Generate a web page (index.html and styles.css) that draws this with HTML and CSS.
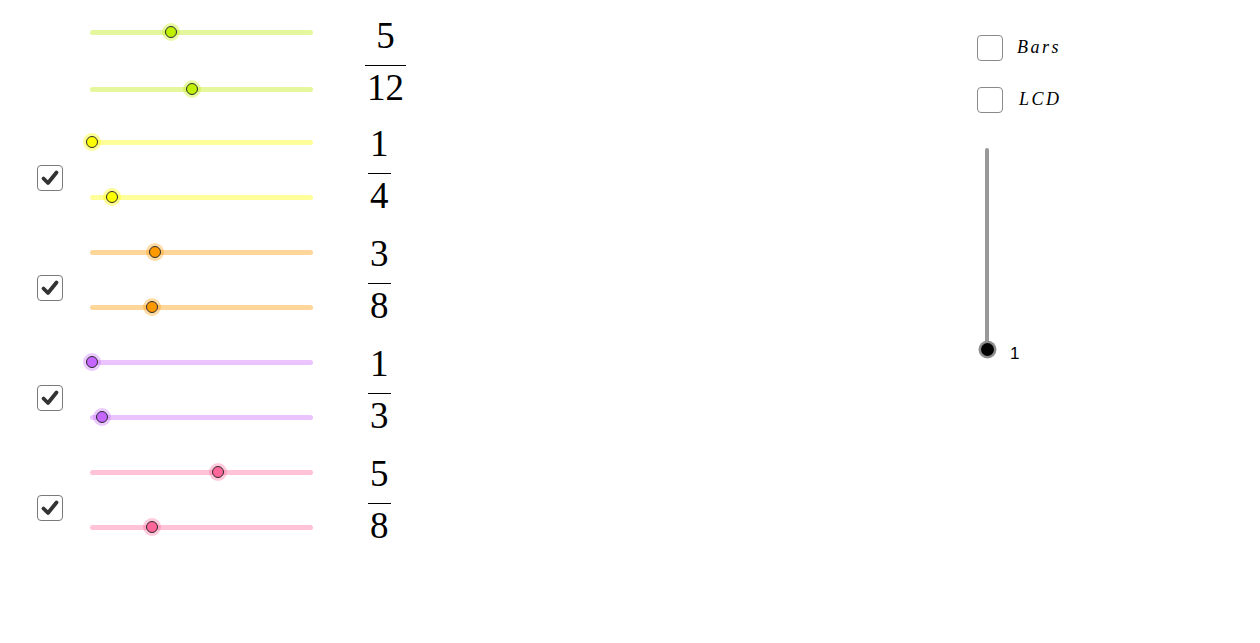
FILE: index.html
```html
<!DOCTYPE html>
<html>
<head>
<meta charset="utf-8">
<link rel="stylesheet" href="styles.css">
</head>
<body>
<div class="page">
  <div class="left">
    <div class="group">
      <div class="cb-cell"></div>
      <div class="sliders">
        <div class="slider lime"><div class="track"></div><div class="knob" style="left:81px"></div></div>
        <div class="slider lime first-pair"><div class="track"></div><div class="knob" style="left:102px"></div></div>
      </div>
      <div class="frac wide"><span class="num">5</span><span class="den">12</span></div>
    </div>
    <div class="group">
      <div class="cb-cell"><span class="cb checked"><svg viewBox="0 0 26 26" width="26" height="26"><path d="M6.5 13.5 L11 18 L19.5 7.5" fill="none" stroke="#333" stroke-width="3.8" stroke-linecap="round" stroke-linejoin="round"/></svg></span></div>
      <div class="sliders">
        <div class="slider yellow"><div class="track"></div><div class="knob" style="left:2px"></div></div>
        <div class="slider yellow"><div class="track"></div><div class="knob" style="left:22px"></div></div>
      </div>
      <div class="frac"><span class="num">1</span><span class="den">4</span></div>
    </div>
    <div class="group">
      <div class="cb-cell"><span class="cb checked"><svg viewBox="0 0 26 26" width="26" height="26"><path d="M6.5 13.5 L11 18 L19.5 7.5" fill="none" stroke="#333" stroke-width="3.8" stroke-linecap="round" stroke-linejoin="round"/></svg></span></div>
      <div class="sliders">
        <div class="slider orange"><div class="track"></div><div class="knob" style="left:65px"></div></div>
        <div class="slider orange"><div class="track"></div><div class="knob" style="left:62px"></div></div>
      </div>
      <div class="frac"><span class="num">3</span><span class="den">8</span></div>
    </div>
    <div class="group">
      <div class="cb-cell"><span class="cb checked"><svg viewBox="0 0 26 26" width="26" height="26"><path d="M6.5 13.5 L11 18 L19.5 7.5" fill="none" stroke="#333" stroke-width="3.8" stroke-linecap="round" stroke-linejoin="round"/></svg></span></div>
      <div class="sliders">
        <div class="slider purple"><div class="track"></div><div class="knob" style="left:2px"></div></div>
        <div class="slider purple"><div class="track"></div><div class="knob" style="left:12px"></div></div>
      </div>
      <div class="frac"><span class="num">1</span><span class="den">3</span></div>
    </div>
    <div class="group">
      <div class="cb-cell"><span class="cb checked"><svg viewBox="0 0 26 26" width="26" height="26"><path d="M6.5 13.5 L11 18 L19.5 7.5" fill="none" stroke="#333" stroke-width="3.8" stroke-linecap="round" stroke-linejoin="round"/></svg></span></div>
      <div class="sliders">
        <div class="slider pink"><div class="track"></div><div class="knob" style="left:128px"></div></div>
        <div class="slider pink"><div class="track"></div><div class="knob" style="left:62px"></div></div>
      </div>
      <div class="frac"><span class="num">5</span><span class="den">8</span></div>
    </div>
  </div>
  <div class="right">
    <div class="opt"><span class="cb"></span><span class="opt-label">Bars</span></div>
    <div class="opt"><span class="cb"></span><span class="opt-label lcd">LCD</span></div>
    <div class="vrow">
      <div class="vslider"><div class="vtrack"></div><div class="vknob"></div></div>
      <span class="vlabel">1</span>
    </div>
  </div>
</div>
</body>
</html>
```
FILE: styles.css
```css
html, body {
  margin: 0;
  padding: 0;
  background: #ffffff;
  font-family: "Liberation Serif", serif;
  color: #000;
}
.page {
  display: flex;
  width: 1260px;
  height: 643px;
}
.left {
  flex: none;
  width: 977px;
  padding-top: 10px;
  box-sizing: border-box;
}
.group {
  display: flex;
  height: 110px;
}
.cb-cell {
  flex: none;
  width: 90px;
  padding-top: 45px;
  padding-left: 37px;
  box-sizing: border-box;
}
.cb {
  display: block;
  width: 26px;
  height: 26px;
  box-sizing: border-box;
  border: 1px solid #8a8a8a;
  border-radius: 4px;
  background: #fff;
  position: relative;
}
.cb.checked {
  border: 1.5px solid #7a7a7a;
}
.cb svg {
  position: absolute;
  left: -1.5px;
  top: -1.5px;
}
.sliders {
  flex: none;
  width: 223px;
  display: flex;
  flex-direction: column;
  gap: 11px;
}
.slider {
  position: relative;
  height: 44px;
  display: flex;
  align-items: center;
}
.slider.first-pair {
  margin-top: 2px;
}
.track {
  width: 100%;
  height: 5px;
  border-radius: 2.5px;
}
.knob {
  position: absolute;
  top: 50%;
  width: 12px;
  height: 12px;
  margin: -6px 0 0 -6px;
  box-sizing: border-box;
  border: 1px solid #2a2a2a;
  border-radius: 50%;
}
.lime .track { background: #e4f79c; }
.lime .knob { background: #bff000; box-shadow: 0 0 0 3px rgba(191, 240, 0, 0.35); }
.yellow .track { background: #ffff99; }
.yellow .knob { background: #ffff00; box-shadow: 0 0 0 3px rgba(255, 255, 0, 0.4); }
.orange .track { background: #ffd699; }
.orange .knob { background: #ff9900; box-shadow: 0 0 0 3px rgba(255, 153, 0, 0.35); }
.purple .track { background: #ebc4ff; }
.purple .knob { background: #c466ff; box-shadow: 0 0 0 3px rgba(196, 102, 255, 0.35); }
.pink .track { background: #ffc2d6; }
.pink .knob { background: #ff6699; box-shadow: 0 0 0 3px rgba(255, 102, 153, 0.35); }

.frac {
  flex: none;
  margin-left: 55px;
  margin-top: 6px;
  display: inline-flex;
  flex-direction: column;
  align-items: stretch;
  align-self: flex-start;
  font-size: 37px;
  line-height: 36px;
  text-align: center;
}
.frac.wide {
  margin-left: 52px;
  margin-top: 8px;
}
.num {
  display: block;
  margin-bottom: 11px;
}
.den {
  display: block;
  border-top: 1.5px solid #000;
  padding: 4px 2px 0;
}

.right {
  flex: none;
  padding-top: 35px;
  display: flex;
  flex-direction: column;
}
.opt {
  display: flex;
  align-items: center;
  height: 26px;
  margin-bottom: 26px;
}
.opt-label {
  margin-left: 14px;
  font-style: italic;
  font-size: 18px;
  letter-spacing: 2.5px;
  margin-top: -2px;
}
.opt-label.lcd {
  margin-left: 16px;
}
.vrow {
  margin-top: 9px;
  display: flex;
  align-items: flex-end;
}
.vslider {
  position: relative;
  width: 20px;
  height: 208px;
  display: flex;
  justify-content: center;
}
.vtrack {
  width: 4px;
  height: 201px;
  background: #999999;
  border-radius: 2px;
}
.vknob {
  position: absolute;
  left: 3.5px;
  bottom: 0;
  width: 13px;
  height: 13px;
  box-sizing: border-box;
  border-radius: 50%;
  background: #000;
  box-shadow: 0 0 0 2.5px #8c8c8c;
}
.vlabel {
  font-family: "Liberation Sans", Arial, sans-serif;
  font-size: 17px;
  line-height: 17px;
  margin-left: 13px;
  margin-bottom: -6px;
}
```
